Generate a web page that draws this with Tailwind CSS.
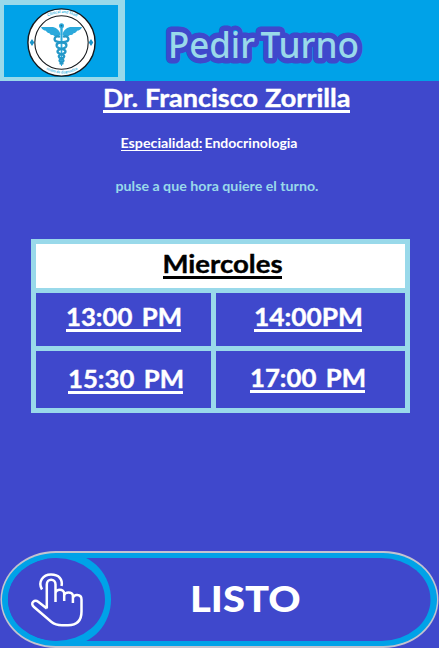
<!DOCTYPE html>
<html lang="es">
<head>
<meta charset="utf-8">
<title>Pedir Turno</title>
<script src="https://cdn.jsdelivr.net/npm/@tailwindcss/browser@4"></script>
</head>
<body class="w-[439px] h-[648px] overflow-hidden bg-[#3f48cc] font-[Lato,'Noto_Sans',sans-serif]">
<main class="flex h-[648px] w-[439px] flex-col">
  <header class="flex h-[81px] shrink-0 bg-[#00a2e8]">
    <div class="h-[81px] w-[125px] border-t-[5px] border-r-[7px] border-b-4 border-l-4 border-[#99d9ea]">
      <svg class="block" width="114" height="72" viewBox="4 5 114 72">
        <defs>
          <path id="topArc" d="M33 42a29 29 0 0 1 58 0"/>
          <path id="lowArc" d="M30.500 42a31.500 31.500 0 0 0 63 0"/>
        </defs>
        <circle cx="61.500" cy="42.500" r="33.600" fill="#fff" stroke="#15191d" stroke-width="1.400"/>
        <circle cx="61.500" cy="42.500" r="26.700" fill="#fff" stroke="#15191d" stroke-width="1.100"/>
        <g fill="#35b3df" font-size="4" font-weight="700">
          <text textLength="30" lengthAdjust="spacingAndGlyphs"><textPath href="#topArc" startOffset="31">Clinical and Staff</textPath></text>
          <text textLength="33" lengthAdjust="spacingAndGlyphs"><textPath href="#lowArc" startOffset="33">centro de diagnostico</textPath></text>
        </g>
        <path d="M32 39l2.300 3.500L32 46l-2.300-3.500zM91 39l2.300 3.500L91 46l-2.300-3.500z" fill="#1994c9"/>
        <g fill="#2ba9dc">
          <path d="M60.500 34.500c-1-5-5-7.500-9-7.500h-10.500c1 2.500 3 3.700 5 3.800c.5 1.700 2 2.400 3.500 2.400c.7 1.500 2.200 2 3.700 1.900c1.600 2 4.800 2.200 7.300-.6zM62.500 34.500c1-5 5-7.500 9-7.500H82c-1 2.500-3 3.700-5 3.800c-.5 1.700-2 2.400-3.500 2.400c-.7 1.500-2.200 2-3.700 1.900c-1.600 2-4.800 2.200-7.300-.6z"/>
          <circle cx="61.500" cy="25.700" r="2.500"/>
          <path d="M60.300 28h2.400L62 66h-1z"/>
        </g>
        <g fill="none" stroke="#2598c8" stroke-width="2.300" stroke-linecap="round">
          <path d="M59 36.500c-5-.8-6 4.500-1.800 5.200c5 .8 10.300.5 9 4.600c-1.300 3.500-8.700 1.500-8.700 5.200c0 3.200 7 1.800 6.700 5c-.3 2.500-4.700 1.500-4.700 4c0 1.700 2.500 1.500 3 3"/>
          <path d="M64 36.500c5-.8 6 4.500 1.800 5.200c-5 .8-10.300.5-9 4.600c1.300 3.500 8.700 1.500 8.700 5.200c0 3.200-7 1.800-6.700 5c.3 2.500 4.700 1.500 4.700 4c0 1.700-2.500 1.500-3 3"/>
        </g>
        <circle cx="61.500" cy="25.700" r=".9" fill="#176d91"/>
      </svg>
    </div>
    <svg class="block font-['Noto_Sans','Open_Sans',sans-serif]" width="314" height="81" viewBox="125 0 314 81">
      <g font-size="37" font-weight="500" fill="#99d9ea" stroke="#3f48cc" stroke-width="11" stroke-linejoin="round" paint-order="stroke">
        <text x="168" y="58" textLength="87" lengthAdjust="spacingAndGlyphs">Pedir</text>
        <text x="260.500" y="58" textLength="98.500" lengthAdjust="spacingAndGlyphs">Turno</text>
      </g>
    </svg>
  </header>

  <section class="flex h-[158px] shrink-0 flex-col">
    <svg class="block" width="439" height="44" viewBox="0 81 439 44">
      <g font-size="25" font-weight="700" fill="#fff" stroke="#fff" stroke-width=".4">
        <text x="103" y="107" textLength="35" lengthAdjust="spacingAndGlyphs">Dr.</text>
        <text x="145" y="107" textLength="113" lengthAdjust="spacingAndGlyphs">Francisco</text>
        <text x="265" y="107" textLength="85.500" lengthAdjust="spacingAndGlyphs">Zorrilla</text>
      </g>
      <path d="M103 110h247v3H103z" fill="#fff"/>
    </svg>
    <svg class="block" width="439" height="44" viewBox="0 125 439 44">
      <g font-size="13" font-weight="700" fill="#fff">
        <text x="120.500" y="148" textLength="82" lengthAdjust="spacingAndGlyphs">Especialidad:</text>
        <text x="204.500" y="148" textLength="93" lengthAdjust="spacingAndGlyphs">Endocrinologia</text>
      </g>
      <path d="M121 150h81v1h-81z" fill="#fff"/>
    </svg>
    <svg class="block" width="439" height="44" viewBox="0 169 439 44">
      <text x="115.500" y="191" textLength="203" lengthAdjust="spacingAndGlyphs" font-size="13" font-weight="700" fill="#99d9ea">pulse a que hora quiere el turno.</text>
    </svg>
  </section>

  <section class="ml-[31px] grid h-[174px] w-[379px] shrink-0 grid-cols-[175px_189px] grid-rows-[44px_53px_57px] gap-[5px] bg-[#99d9ea] p-[5px] text-white">
    <div class="col-span-2 bg-white text-black">
      <svg class="block" width="369" height="44" viewBox="36 244 369 44" fill="currentColor">
        <text x="162.500" y="273" textLength="120" lengthAdjust="spacingAndGlyphs" font-size="25" font-weight="700" stroke="currentColor" stroke-width=".4">Miercoles</text>
        <path d="M163 276h119v3H163z"/>
      </svg>
    </div>
    <button class="bg-[#3f48cc]">
      <svg class="block [word-spacing:3px]" width="175" height="53" viewBox="36 293 175 53" fill="currentColor">
        <text x="66" y="326" textLength="116" lengthAdjust="spacingAndGlyphs" font-size="25" font-weight="700" stroke="currentColor" stroke-width=".4">13:00 PM</text>
        <path d="M66 329h115v3H66z"/>
      </svg>
    </button>
    <button class="bg-[#3f48cc]">
      <svg class="block" width="189" height="53" viewBox="216 293 189 53" fill="currentColor">
        <text x="254" y="326" textLength="109" lengthAdjust="spacingAndGlyphs" font-size="25" font-weight="700" stroke="currentColor" stroke-width=".4">14:00PM</text>
        <path d="M254 329h108v3H254z"/>
      </svg>
    </button>
    <button class="bg-[#3f48cc]">
      <svg class="block [word-spacing:3px]" width="175" height="57" viewBox="36 351 175 57" fill="currentColor">
        <text x="68" y="388" textLength="116" lengthAdjust="spacingAndGlyphs" font-size="25" font-weight="700" stroke="currentColor" stroke-width=".4">15:30 PM</text>
        <path d="M68 391h115v3H68z"/>
      </svg>
    </button>
    <button class="bg-[#3f48cc]">
      <svg class="block [word-spacing:3px]" width="189" height="57" viewBox="216 351 189 57" fill="currentColor">
        <text x="250" y="387" textLength="116" lengthAdjust="spacingAndGlyphs" font-size="25" font-weight="700" stroke="currentColor" stroke-width=".4">17:00 PM</text>
        <path d="M250 390h115v3H250z"/>
      </svg>
    </button>
  </section>

  <button class="mt-auto block h-[97px] w-[439px] shrink-0">
    <svg class="block" width="439" height="97" viewBox="0 551 439 97">
      <rect x=".5" y="551" width="438" height="97" rx="55" ry="48.500" fill="#c3c3cf"/>
      <rect x="2" y="553" width="435" height="93" rx="54" ry="46.500" fill="#00a2e8"/>
      <rect x="8" y="558" width="422.500" height="83" rx="49" ry="41.500" fill="#3f48cc"/>
      <path d="M56 553h13c24 2 42 22 42 46.500S93 644 69 646H56z" fill="#00a2e8"/>
      <ellipse cx="56.500" cy="599.500" rx="48.500" ry="41.500" fill="#3f48cc"/>
      <g fill="none" stroke="#fff" stroke-width="2.500" stroke-linejoin="round">
        <path d="M42 589.500C37.500 582 43 574.500 51 574.500c8 0 12 5 10.500 11.500"/>
        <path d="M46.800 608.500V584.500c0-6.200 8.700-6.200 8.700 0V602M55.500 593.500c0-5 8.700-5 8.700 0v7.500M64.200 596c0-4.700 8.700-4.700 8.700 0v7M72.900 598.500c0-4.700 8.600-4.700 8.600 1v12c0 9-5 13.700-13.500 13.700h-6c-4.500 0-7.500-.7-10.500-3.200L34 607c-4.500-4 .5-8 4.500-5l8.300 6.500"/>
      </g>
      <text x="190" y="612" textLength="110.500" lengthAdjust="spacingAndGlyphs" font-size="36" font-weight="900" fill="#fff">LISTO</text>
    </svg>
  </button>
</main>
</body>
</html>
